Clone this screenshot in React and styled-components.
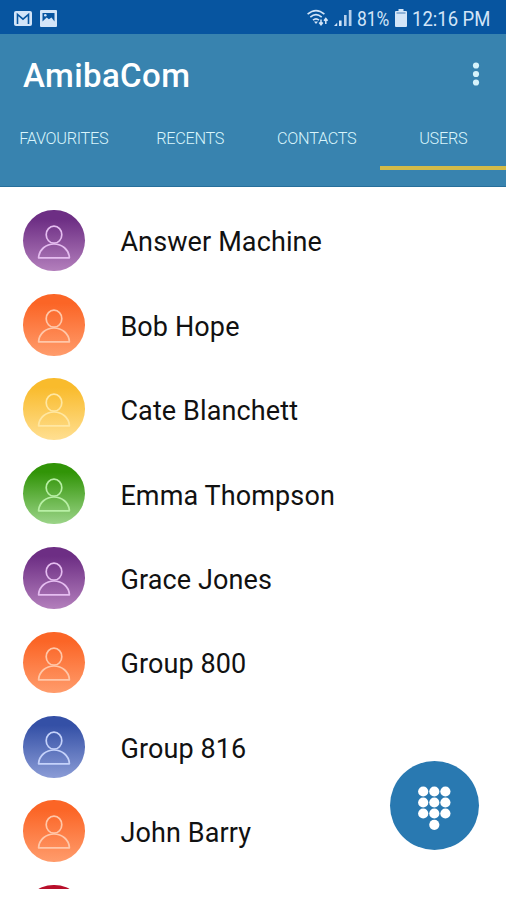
import React from "react";
import styled, { createGlobalStyle } from "styled-components";

const Global = createGlobalStyle`
  * { box-sizing: border-box; }
  body { margin: 0; background: #fff; font-family: Roboto, "Liberation Sans", sans-serif; }
`;

const Screen = styled.div`
  width: 506px;
  height: 900px;
  overflow: hidden;
  background: #fff;
  position: relative;
`;

const StatusBar = styled.div`
  height: 34px;
  background: #0755a0;
  display: flex;
  justify-content: space-between;
  padding: 0 15px 0 14px;
  color: #d3e5f8;
`;

const StatusGroup = styled.div`
  display: flex;
  align-items: center;
  padding-top: 2px;
  gap: ${(p) => p.$gap}px;
`;

const StatusText = styled.span`
  display: block;
  width: ${(p) => p.$width}px;
  padding-top: 1px;
  font-size: 21px;
  line-height: 24px;
  white-space: nowrap;
  transform: scaleX(${(p) => p.$scale});
  transform-origin: 0 50%;
`;

const Header = styled.header`
  height: 153px;
  background: #3883af;
  border-bottom: 1.5px solid #276f9b;
`;

const TitleRow = styled.div`
  height: 81px;
  display: flex;
  align-items: center;
  justify-content: space-between;
  padding: 0 26px 0 23px;
`;

const Title = styled.h1`
  margin: 3px 0 0;
  font-size: 33px;
  line-height: 40px;
  font-weight: 500;
  letter-spacing: 0.4px;
  color: #fff;
`;

const MenuButton = styled.button`
  border: 0;
  padding: 0;
  margin-top: -2px;
  background: none;
  display: flex;
`;

const Tabs = styled.nav`
  display: grid;
  grid-template-columns: repeat(4, 1fr);
  height: 55px;
`;

const Tab = styled.div`
  display: flex;
  justify-content: center;
  padding: 14px 0 0 1px;
  font-size: 16.3px;
  line-height: 20px;
  font-weight: 300;
  letter-spacing: -0.3px;
  color: #d9f5fc;
  border-bottom: 4px solid ${(p) => (p.$active ? "#d3bb48" : "transparent")};
`;

const List = styled.ul`
  list-style: none;
  margin: 0;
  padding: 22.7px 0 0;
  height: 701.5px;
  overflow: hidden;
`;

const Row = styled.li`
  display: flex;
  align-items: center;
  gap: 35.8px;
  height: 61.6px;
  margin-bottom: 22.8px;
  padding-left: 23px;
`;

const Avatar = styled.span`
  width: 61.6px;
  height: 61.6px;
  flex: none;
  border-radius: 50%;
  background: linear-gradient(${(p) => p.$from}, ${(p) => p.$from} 15%, ${(p) => p.$to});
`;

const Name = styled.span`
  padding-top: 4px;
  font-size: 27px;
  line-height: 32px;
  letter-spacing: 0.12px;
  color: #111;
`;

const Fab = styled.button`
  position: absolute;
  left: 390px;
  top: 761px;
  width: 89px;
  height: 89px;
  padding: 0;
  border: 0;
  border-radius: 50%;
  background: #2979b1;
  display: flex;
`;

const PALETTE = {
  purple: ["#6d2e84", "#b37fbc", "#e5bdf0"],
  orange: ["#fb6526", "#ff9c6c", "#ffc7a9"],
  yellow: ["#f9bb2c", "#ffdf91", "#ffe7a2"],
  green: ["#319407", "#9bd488", "#b8efa5"],
  blue: ["#3450a6", "#8b9cd6", "#c5d2fa"],
  red: ["#b80f2b", "#e0707c", "#ffc0c8"],
};

const USERS = [
  ["Answer Machine", "purple"],
  ["Bob Hope", "orange"],
  ["Cate Blanchett", "yellow"],
  ["Emma Thompson", "green"],
  ["Grace Jones", "purple"],
  ["Group 800", "orange"],
  ["Group 816", "blue"],
  ["John Barry", "orange"],
  ["", "red"],
];

const TABS = ["FAVOURITES", "RECENTS", "CONTACTS", "USERS"];

const Person = ({ color }) => (
  <svg width="61.6" height="61.6" viewBox="0 0 61.6 61.6" fill="none" stroke={color} strokeWidth="1.7" strokeLinejoin="round">
    <ellipse cx="31" cy="24.7" rx="7.8" ry="8.5" />
    <path d="M15.6 47.8C16 39.4 23.2 34 31 34s15 5.4 15.4 13.8z" />
  </svg>
);

const MailIcon = () => (
  <svg width="18" height="15" viewBox="0 0 18 15">
    <rect width="18" height="15" rx="2" fill="currentColor" />
    <path d="M3.5 13V3.5L9 8.2l5.5-4.7V13" fill="none" stroke="#0755a0" strokeWidth="1.6" />
  </svg>
);

const PictureIcon = () => (
  <svg width="17" height="17" viewBox="0 0 17 17">
    <rect width="17" height="17" rx="1" fill="currentColor" />
    <path d="M2.5 3h12v8.5l-3-4-2.6 1.7-2.2-1.6-4.2 4z" fill="#0755a0" />
    <circle cx="5.3" cy="5.3" r="1.3" fill="currentColor" />
  </svg>
);

const WifiIcon = () => (
  <svg width="22" height="18" viewBox="0 0 22 18" fill="none" stroke="currentColor" strokeWidth="1.6">
    <path d="M.6 5.2Q9 -2 17.4 5.2M3.3 8.2Q9 3.2 14.7 8.2M6 11.2Q9 8.6 12 11.2" />
    <path d="M7 12.5h4L9 15z" fill="currentColor" stroke="none" />
    <path d="M14 10.5v5M12.2 13.5l1.8 2.3 1.8-2.3M18.8 15V10M17 11.7l1.8-2.2 1.8 2.2" strokeWidth="1.5" />
  </svg>
);

const SignalIcon = () => (
  <svg width="18" height="18" viewBox="0 0 18 18" fill="currentColor">
    <path d="M0 17l3.2-3.2V17zM5 11.5h2.6V17H5z" />
    <path d="M10 6h2.6v11H10zM14.8 1h2.7v16h-2.7z" opacity=".85" />
  </svg>
);

const BatteryIcon = () => (
  <svg width="12" height="18" viewBox="0 0 12 18" fill="currentColor">
    <path d="M3.5 0h5v2H11a1 1 0 0 1 1 1v14a1 1 0 0 1-1 1H1a1 1 0 0 1-1-1V3a1 1 0 0 1 1-1h2.5z" />
    <path d="M1.5 4h9" stroke="#477fb9" strokeWidth="1" />
  </svg>
);

const DotsIcon = () => (
  <svg width="8" height="26" viewBox="0 0 8 26" fill="#d7f3fb">
    {[4.5, 13, 21.5].map((y) => <circle key={y} cx="4" cy={y} r="3.1" />)}
  </svg>
);

const Keypad = () => (
  <svg width="89" height="89" viewBox="0 0 89 89" fill="#fff">
    {[30.5, 41.5, 52.5].map((y) => [33.2, 44.3, 55.4].map((x) => <circle key={x + "-" + y} cx={x} cy={y} r="5.1" />))}
    <circle cx="44.3" cy="63.8" r="5.1" />
  </svg>
);

export default function App() {
  return (
    <Screen>
      <Global />
      <StatusBar>
        <StatusGroup $gap={8}>
          <MailIcon />
          <PictureIcon />
        </StatusGroup>
        <StatusGroup $gap={5}>
          <WifiIcon />
          <SignalIcon />
          <StatusText $width={33} $scale={0.83}>81%</StatusText>
          <BatteryIcon />
          <StatusText $width={79} $scale={0.88}>12:16 PM</StatusText>
        </StatusGroup>
      </StatusBar>
      <Header>
        <TitleRow>
          <Title>AmibaCom</Title>
          <MenuButton aria-label="Menu"><DotsIcon /></MenuButton>
        </TitleRow>
        <Tabs>
          {TABS.map((label) => (
            <Tab key={label} $active={label === "USERS"}>{label}</Tab>
          ))}
        </Tabs>
      </Header>
      <List>
        {USERS.map(([name, color], i) => (
          <Row key={i}>
            <Avatar $from={PALETTE[color][0]} $to={PALETTE[color][1]}>
              <Person color={PALETTE[color][2]} />
            </Avatar>
            <Name>{name}</Name>
          </Row>
        ))}
      </List>
      <Fab aria-label="Keypad"><Keypad /></Fab>
    </Screen>
  );
}
